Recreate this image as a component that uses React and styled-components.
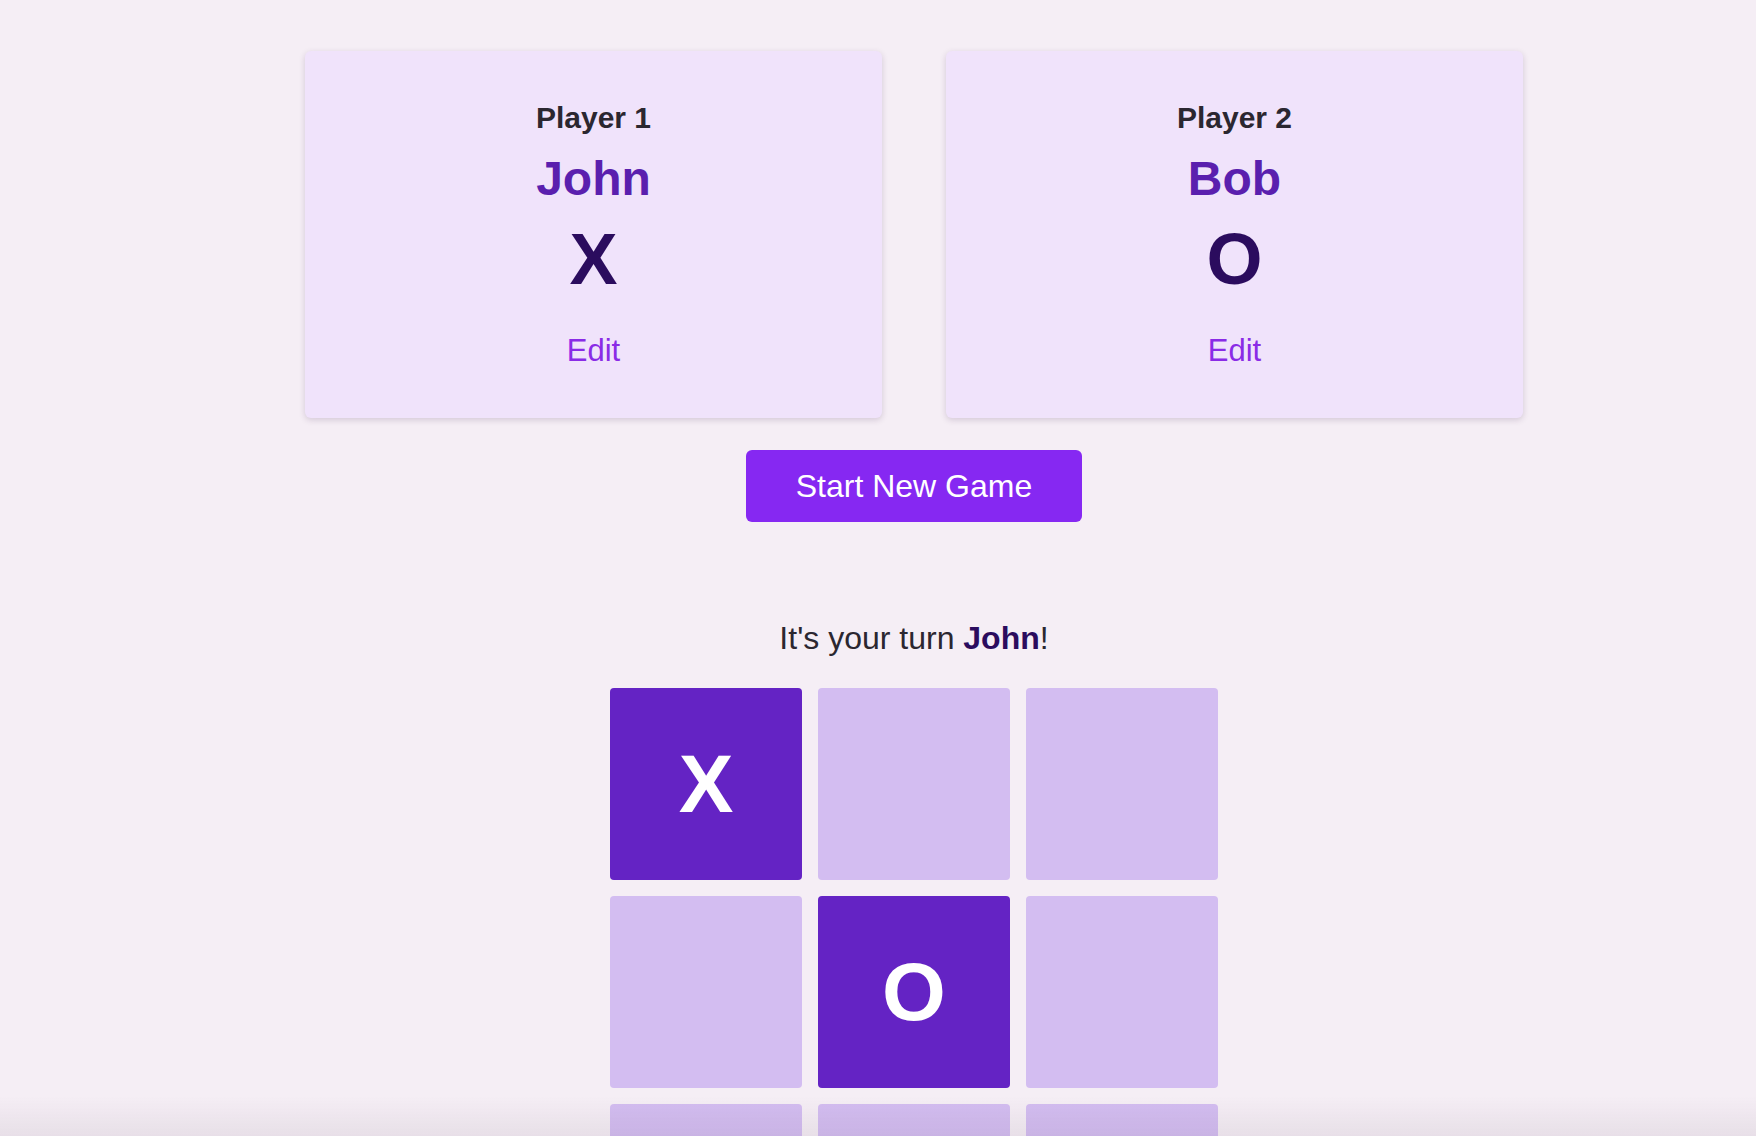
import React, { useState } from "react";
import styled, { createGlobalStyle } from "styled-components";

const GlobalStyle = createGlobalStyle`
  html, body {
    margin: 0;
    padding: 0;
    background-color: #f5eef5;
    font-family: "Liberation Sans", Arial, Helvetica, sans-serif;
  }
  * {
    box-sizing: border-box;
  }
`;

const Page = styled.div`
  min-height: 1136px;
  padding: 51px 0 0 72px;
  display: flex;
  flex-direction: column;
  align-items: center;
`;

const Players = styled.div`
  display: flex;
  gap: 64px;
`;

const Card = styled.div`
  width: 577px;
  height: 367px;
  padding-top: 52px;
  background-color: #f0e3fb;
  border-radius: 6px;
  box-shadow: 0px 2px 6px rgba(60, 30, 80, 0.18);
  display: flex;
  flex-direction: column;
  align-items: center;
  text-align: center;
`;

const Label = styled.div`
  font-size: 30px;
  line-height: 1;
  font-weight: 700;
  color: #2b2730;
`;

const Name = styled.div`
  margin-top: 22px;
  font-size: 48px;
  line-height: 1;
  font-weight: 700;
  color: #5a1fae;
`;

const Symbol = styled.div`
  margin-top: 20px;
  font-size: 72px;
  line-height: 1;
  font-weight: 700;
  color: #2b0c5e;
`;

const EditLink = styled.button`
  margin-top: 40px;
  padding: 0;
  border: none;
  background: none;
  font-family: inherit;
  font-size: 31px;
  line-height: 1;
  color: #8a2be6;
  cursor: pointer;
`;

const StartButton = styled.button`
  margin-top: 32px;
  width: 336px;
  height: 72px;
  border: none;
  border-radius: 6px;
  background-color: #8628f2;
  color: #fff;
  font-family: inherit;
  font-size: 32px;
  line-height: 1;
  cursor: pointer;
`;

const Turn = styled.p`
  margin: 100px 0 0;
  font-size: 32px;
  line-height: 1;
  color: #2b2730;

  strong {
    color: #2b0c5e;
  }
`;

const Board = styled.div`
  margin-top: 34px;
  display: grid;
  grid-template-columns: repeat(3, 192px);
  grid-auto-rows: 192px;
  gap: 16px;
`;

const Cell = styled.button`
  border: none;
  border-radius: 4px;
  padding: 0;
  background-color: ${(props) => (props.filled ? "#6423c4" : "#d3bdf1")};
  color: #fff;
  font-family: inherit;
  font-size: 82px;
  font-weight: 700;
  line-height: 1;
  display: flex;
  align-items: center;
  justify-content: center;
  cursor: pointer;
`;

const BottomFade = styled.div`
  position: fixed;
  left: 0;
  right: 0;
  bottom: 0;
  height: 40px;
  pointer-events: none;
  background: linear-gradient(
    to bottom,
    rgba(120, 100, 120, 0) 0%,
    rgba(120, 100, 120, 0.1) 100%
  );
`;

function App() {
  const [players] = useState([
    { label: "Player 1", name: "John", symbol: "X" },
    { label: "Player 2", name: "Bob", symbol: "O" },
  ]);
  const [cells] = useState(["X", "", "", "", "O", "", "", "", ""]);

  return (
    <>
      <GlobalStyle />
      <Page>
        <Players>
          {players.map((p) => (
            <Card key={p.label}>
              <Label>{p.label}</Label>
              <Name>{p.name}</Name>
              <Symbol>{p.symbol}</Symbol>
              <EditLink>Edit</EditLink>
            </Card>
          ))}
        </Players>

        <StartButton>Start New Game</StartButton>

        <Turn>
          It's your turn <strong>John</strong>!
        </Turn>

        <Board>
          {cells.map((c, i) => (
            <Cell key={i} filled={c !== ""}>
              {c}
            </Cell>
          ))}
        </Board>
      </Page>
      <BottomFade />
    </>
  );
}

export default App;
